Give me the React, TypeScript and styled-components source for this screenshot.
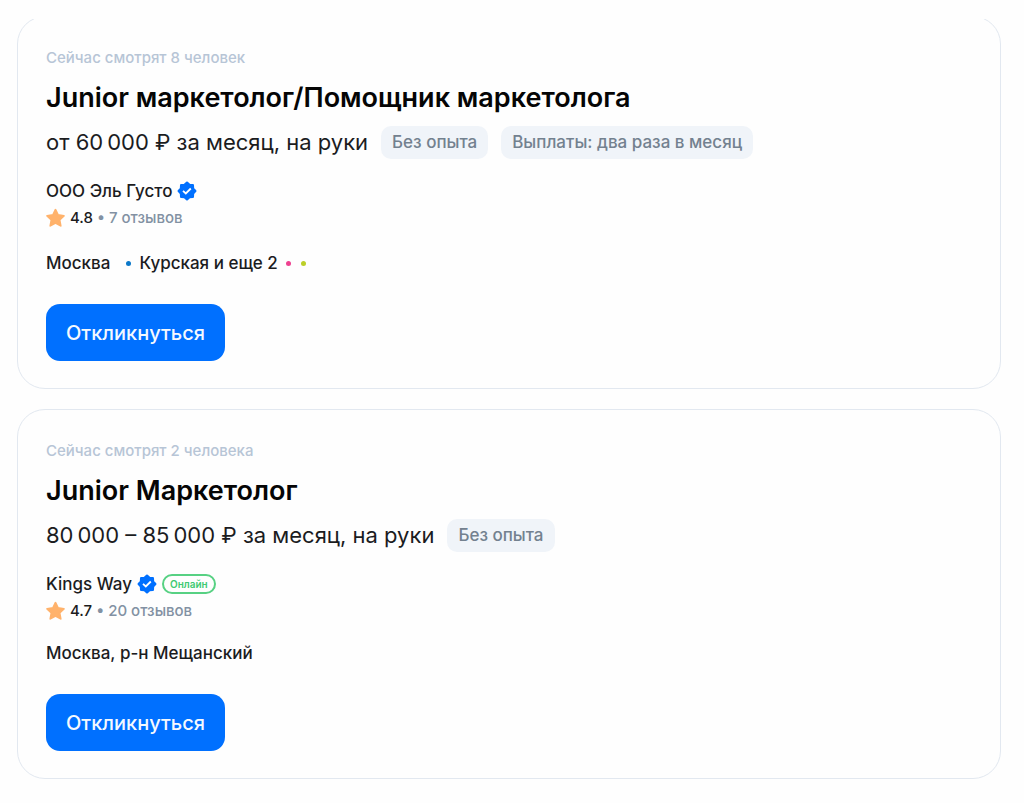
import React from "react";
import styled, { createGlobalStyle } from "styled-components";

const GlobalStyle = createGlobalStyle`
  *, *::before, *::after { box-sizing: border-box; }
  body {
    margin: 0;
    background: #fefefe;
    color: #1b1c1e;
    font-family: Inter, "Liberation Sans", sans-serif;
  }
`;

const Feed = styled.main`
  display: flex;
  flex-direction: column;
  gap: 20px;
  margin: 19px 23px 23px 17px;
  overflow: hidden;
`;

const Card = styled.article<{ $scrolled?: boolean }>`
  margin-top: ${(p) => (p.$scrolled ? "-3px" : "0")};
  padding: 28px 28px 27px;
  border: 1px solid #e2e8f0;
  border-radius: 28px;
`;

const Viewers = styled.p`
  margin: 0;
  color: #b7c5d6;
  font-size: 15px;
  font-weight: 500;
  line-height: 26px;
`;

const Title = styled.h2`
  margin: 10px 0;
  color: #050505;
  font-size: 27px;
  font-weight: 600;
  line-height: 34px;
`;

const Terms = styled.div`
  display: flex;
  flex-wrap: wrap;
  align-items: flex-end;
  gap: 13px;
`;

const Salary = styled.span`
  font-size: 22px;
  line-height: 34px;
`;

const Tag = styled.span`
  padding: 0 11px;
  border-radius: 10px;
  background: #f0f4f9;
  color: #73818f;
  font-size: 17px;
  font-weight: 500;
  line-height: 33px;
`;

const Company = styled.div`
  display: flex;
  align-items: center;
  gap: 5px;
  margin-top: 18px;
  font-size: 17px;
  font-weight: 500;
  line-height: 28px;
`;

const Online = styled.span`
  padding: 0 6px;
  border: 2px solid #57d183;
  border-radius: 10px;
  color: #3fca72;
  font-size: 10px;
  font-weight: 600;
  line-height: 16px;
`;

const Rating = styled.div`
  display: flex;
  align-items: center;
  gap: 4px;
  font-size: 15px;
  font-weight: 500;
  line-height: 26px;
`;

const Reviews = styled.span`
  color: #8291a3;
`;

const Place = styled.div<{ $metro?: boolean }>`
  display: flex;
  align-items: center;
  margin-top: 16px;
  padding-top: ${(p) => (p.$metro ? "3px" : "0")};
  font-size: 17px;
  font-weight: 500;
  line-height: 26px;
`;

const Metro = styled.span`
  display: flex;
  align-items: center;
  gap: 8px;
  margin-left: 16px;
`;

const Lines = styled.span`
  display: flex;
  gap: 10px;
`;

const Dot = styled.span<{ $color: string }>`
  width: 5px;
  height: 5px;
  border-radius: 50%;
  background: ${(p) => p.$color};
`;

const Apply = styled.button`
  display: block;
  height: 57px;
  margin-top: 28px;
  padding: 0 20px;
  border: 0;
  border-radius: 14px;
  background: #0070ff;
  color: #f5f9ff;
  font-family: inherit;
  font-size: 20px;
  font-weight: 500;
  line-height: 28px;
  cursor: pointer;
`;

const Verified = () => (
  <svg width="20" height="20" viewBox="0 0 20 20" aria-hidden="true">
    <path
      d="M10 1.6 12.5 3.9 15.9 4.1 16.1 7.5 18.4 10 16.1 12.5 15.9 15.9 12.5 16.1 10 18.4 7.5 16.1 4.1 15.9 3.9 12.5 1.6 10 3.9 7.5 4.1 4.1 7.5 3.9Z"
      fill="#0070ff"
      stroke="#0070ff"
      strokeWidth="2.2"
      strokeLinejoin="round"
    />
    <path d="m6 9.8 2.8 2.7 5-5" fill="none" stroke="#fff" strokeWidth="1.8" />
  </svg>
);

const Star = () => (
  <svg width="20" height="20" viewBox="0 0 20 20" aria-hidden="true">
    <path
      d="m9.5 1.7 2.5 5.3 5.9.8-4.3 4.1 1.1 5.9-5.2-2.9-5.2 2.9 1.1-5.9-4.3-4.1 5.9-.8Z"
      fill="#ffb26b"
      stroke="#ffb26b"
      strokeWidth="1.8"
      strokeLinejoin="round"
    />
  </svg>
);

interface Vacancy {
  viewers: string;
  title: string;
  salary: string;
  tags: string[];
  company: string;
  online?: boolean;
  rating: string;
  reviews: string;
  place: string;
  metro?: { name: string; color: string; others: string[] };
}

const vacancies: Vacancy[] = [
  {
    viewers: "Сейчас смотрят 8 человек",
    title: "Junior маркетолог/Помощник маркетолога",
    salary: "от 60\u2009000 ₽ за месяц, на руки",
    tags: ["Без опыта", "Выплаты: два раза в месяц"],
    company: "ООО Эль Густо",
    rating: "4.8",
    reviews: "7 отзывов",
    place: "Москва",
    metro: { name: "Курская и еще 2", color: "#0b78c9", others: ["#ee4190", "#bccf28"] },
  },
  {
    viewers: "Сейчас смотрят 2 человека",
    title: "Junior Маркетолог",
    salary: "80\u2009000 – 85\u2009000 ₽ за месяц, на руки",
    tags: ["Без опыта"],
    company: "Kings Way",
    online: true,
    rating: "4.7",
    reviews: "20 отзывов",
    place: "Москва, р-н Мещанский",
  },
];

export default function App() {
  return (
    <>
      <GlobalStyle />
      <Feed>
        {vacancies.map((v, i) => (
          <Card key={v.title} $scrolled={i === 0}>
            <Viewers>{v.viewers}</Viewers>
            <Title>{v.title}</Title>
            <Terms>
              <Salary>{v.salary}</Salary>
              {v.tags.map((tag) => (
                <Tag key={tag}>{tag}</Tag>
              ))}
            </Terms>
            <Company>
              <span>{v.company}</span>
              <Verified />
              {v.online && <Online>Онлайн</Online>}
            </Company>
            <Rating>
              <Star />
              <span>{v.rating}</span>
              <Reviews>• {v.reviews}</Reviews>
            </Rating>
            <Place $metro={Boolean(v.metro)}>
              <span>{v.place}</span>
              {v.metro && (
                <Metro>
                  <Dot $color={v.metro.color} />
                  <span>{v.metro.name}</span>
                  <Lines>
                    {v.metro.others.map((color) => (
                      <Dot key={color} $color={color} />
                    ))}
                  </Lines>
                </Metro>
              )}
            </Place>
            <Apply type="button">Откликнуться</Apply>
          </Card>
        ))}
      </Feed>
    </>
  );
}
